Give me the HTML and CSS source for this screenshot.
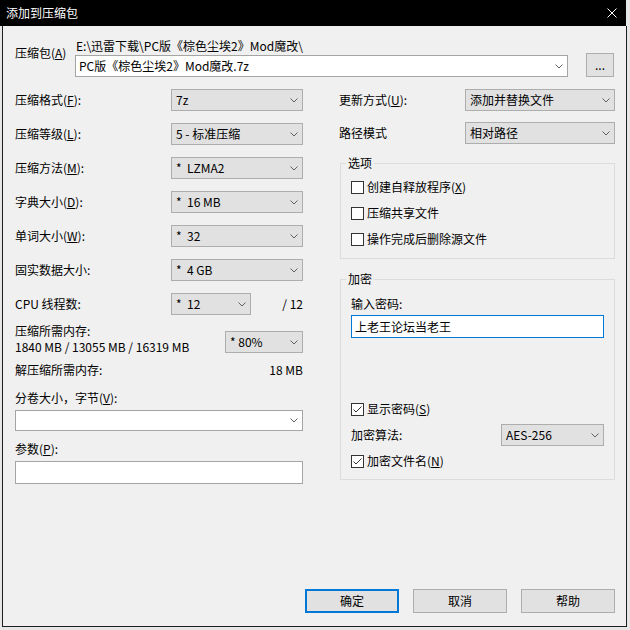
FILE: index.html
```html
<!DOCTYPE html>
<html lang="zh-CN">
<head>
    <meta charset="UTF-8">
    <title>添加到压缩包</title>
    <link rel="stylesheet" href="styles.css">
</head>
<body>

<div class="window">
    <div class="titlebar">
        <span>添加到压缩包</span>
        <svg class="close" viewBox="0 0 10 10"><path d="M0.5 0.5 9.5 9.5 M9.5 0.5 0.5 9.5"/></svg>
    </div>

    <div class="dialog">
        <!-- archive name -->
        <div class="archive-row">
            <div class="archive-label">压缩包(<u>A</u>)</div>
            <div class="archive-path">
                <div class="path-text">E:\迅雷下载\PC版《棕色尘埃2》Mod魔改\</div>
                <div class="combo">
                    <span>PC版《棕色尘埃2》Mod魔改.7z</span>
                    <svg class="chev" viewBox="0 0 8 5"><path d="M0.5 0.5 4 4 7.5 0.5"/></svg>
                </div>
            </div>
            <div class="browse">...</div>
        </div>

        <div class="columns">
            <!-- left: compression settings -->
            <div class="left">
                <div class="field">
                    <span>压缩格式(<u>F</u>):</span>
                    <div class="select"><span>7z</span><svg class="chev" viewBox="0 0 8 5"><path d="M0.5 0.5 4 4 7.5 0.5"/></svg></div>
                </div>
                <div class="field level">
                    <span>压缩等级(<u>L</u>):</span>
                    <div class="select"><span>5 - 标准压缩</span><svg class="chev" viewBox="0 0 8 5"><path d="M0.5 0.5 4 4 7.5 0.5"/></svg></div>
                </div>
                <div class="field">
                    <span>压缩方法(<u>M</u>):</span>
                    <div class="select"><span>* &nbsp;LZMA2</span><svg class="chev" viewBox="0 0 8 5"><path d="M0.5 0.5 4 4 7.5 0.5"/></svg></div>
                </div>
                <div class="field">
                    <span>字典大小(<u>D</u>):</span>
                    <div class="select"><span>* &nbsp;16 MB</span><svg class="chev" viewBox="0 0 8 5"><path d="M0.5 0.5 4 4 7.5 0.5"/></svg></div>
                </div>
                <div class="field">
                    <span>单词大小(<u>W</u>):</span>
                    <div class="select"><span>* &nbsp;32</span><svg class="chev" viewBox="0 0 8 5"><path d="M0.5 0.5 4 4 7.5 0.5"/></svg></div>
                </div>
                <div class="field">
                    <span>固实数据大小:</span>
                    <div class="select"><span>* &nbsp;4 GB</span><svg class="chev" viewBox="0 0 8 5"><path d="M0.5 0.5 4 4 7.5 0.5"/></svg></div>
                </div>
                <div class="field cpu">
                    <span>CPU 线程数:</span>
                    <div class="select"><span>* &nbsp;12</span><svg class="chev" viewBox="0 0 8 5"><path d="M0.5 0.5 4 4 7.5 0.5"/></svg></div>
                    <span class="value">/ 12</span>
                </div>
                <div class="memory">
                    <div>
                        <div>压缩所需内存:</div>
                        <div class="mem-numbers">1840 MB / 13055 MB / 16319 MB</div>
                    </div>
                    <div class="select"><span>* 80%</span><svg class="chev" viewBox="0 0 8 5"><path d="M0.5 0.5 4 4 7.5 0.5"/></svg></div>
                </div>
                <div class="unpack">
                    <span>解压缩所需内存:</span>
                    <span>18 MB</span>
                </div>
                <div class="volume-label">分卷大小，字节(<u>V</u>):</div>
                <div class="combo volume">
                    <span></span>
                    <svg class="chev" viewBox="0 0 8 5"><path d="M0.5 0.5 4 4 7.5 0.5"/></svg>
                </div>
                <div class="params-label">参数(<u>P</u>):</div>
                <div class="textbox params"></div>
            </div>

            <!-- right: update mode, options, encryption -->
            <div class="right">
                <div class="field">
                    <span>更新方式(<u>U</u>):</span>
                    <div class="select"><span>添加并替换文件</span><svg class="chev" viewBox="0 0 8 5"><path d="M0.5 0.5 4 4 7.5 0.5"/></svg></div>
                </div>
                <div class="field path-mode">
                    <span>路径模式</span>
                    <div class="select"><span>相对路径</span><svg class="chev" viewBox="0 0 8 5"><path d="M0.5 0.5 4 4 7.5 0.5"/></svg></div>
                </div>

                <fieldset class="group options">
                    <legend>选项</legend>
                    <div class="group-body">
                        <div class="check">
                            <svg class="box" viewBox="0 0 13 13"><rect x="0.5" y="0.5" width="12" height="12"/></svg>
                            <span>创建自释放程序(<u>X</u>)</span>
                        </div>
                        <div class="check">
                            <svg class="box" viewBox="0 0 13 13"><rect x="0.5" y="0.5" width="12" height="12"/></svg>
                            <span>压缩共享文件</span>
                        </div>
                        <div class="check">
                            <svg class="box" viewBox="0 0 13 13"><rect x="0.5" y="0.5" width="12" height="12"/></svg>
                            <span>操作完成后删除源文件</span>
                        </div>
                    </div>
                </fieldset>

                <fieldset class="group encrypt">
                    <legend>加密</legend>
                    <div class="group-body">
                        <div>输入密码:</div>
                        <div class="textbox password">上老王论坛当老王</div>
                        <div class="check show-pass">
                            <svg class="box" viewBox="0 0 13 13"><rect x="0.5" y="0.5" width="12" height="12"/><path d="M2.5 6.5 5 9 10.5 3.5"/></svg>
                            <span>显示密码(<u>S</u>)</span>
                        </div>
                        <div class="field method">
                            <span>加密算法:</span>
                            <div class="select"><span>AES-256</span><svg class="chev" viewBox="0 0 8 5"><path d="M0.5 0.5 4 4 7.5 0.5"/></svg></div>
                        </div>
                        <div class="check names">
                            <svg class="box" viewBox="0 0 13 13"><rect x="0.5" y="0.5" width="12" height="12"/><path d="M2.5 6.5 5 9 10.5 3.5"/></svg>
                            <span>加密文件名(<u>N</u>)</span>
                        </div>
                    </div>
                </fieldset>
            </div>
        </div>

        <div class="buttons">
            <button class="btn default">确定</button>
            <button class="btn">取消</button>
            <button class="btn">帮助</button>
        </div>
    </div>
</div>

</body>
</html>
```

FILE: styles.css
```css
* { box-sizing: border-box; }
body { margin: 0; background: #e6e6e6; font-family: "Noto Sans CJK SC", "Noto Sans", sans-serif; font-size: 12px; line-height: 14px; color: #000; }
u { text-decoration-thickness: 1px; text-underline-offset: 1px; }

.window { width: 627px; }
.titlebar { width: 626px; height: 26px; background: #000; color: #fff; display: flex; align-items: center; justify-content: space-between; padding: 0 9px 0 6px; }
.close { width: 10px; height: 10px; fill: none; stroke: #fff; stroke-width: 1; }

.dialog { margin-left: 2px; width: 625px; height: 601px; background: #f0f0f0; border: 1px solid #1e1e1e; border-top: none; padding: 13px 11px 13px 12px; display: flex; flex-direction: column; }

/* shared controls */
.select, .combo { height: 22px; display: flex; align-items: center; justify-content: space-between; padding: 0 4px 0 4px; white-space: nowrap; }
.select { background: #e1e1e1; border: 1px solid #adadad; }
.combo { background: #fff; border: 1px solid #a5a5a5; }
.textbox { background: #fff; border: 1px solid #a5a5a5; }
.chev { width: 8px; height: 5px; flex: none; fill: none; stroke: #606060; stroke-width: 1; }
.field { display: grid; align-items: center; white-space: nowrap; }

.archive-row { display: flex; align-items: flex-start; }
.archive-label { width: 60px; padding-top: 7px; }
.archive-path { width: 493px; }
.path-text { padding-left: 1px; white-space: nowrap; }
.archive-path .combo { margin-top: 2px; padding-left: 3px; }
.browse { margin: 14px 0 0 18px; width: 28px; height: 24px; background: #e1e1e1; border: 1px solid #adadad; text-align: center; line-height: 22px; }

.columns { margin-top: 12px; display: grid; grid-template-columns: 288px 276px; column-gap: 36px; }

/* left column */
.left .field { grid-template-columns: 156px 132px; margin-bottom: 12px; }
.left .field.level { margin-top: 1px; }
.left .field.cpu { grid-template-columns: 156px 80px 52px; margin-bottom: 0; }
.cpu .value { text-align: right; }
.memory { margin-top: 9px; display: flex; justify-content: space-between; align-items: flex-start; white-space: nowrap; }
.mem-numbers { margin-top: 2px; }
.memory .select { width: 78px; margin-top: 7px; }
.unpack { margin-top: 9px; display: flex; justify-content: space-between; }
.volume-label { margin-top: 14px; }
.combo.volume { margin-top: 5px; height: 21px; }
.params-label { margin-top: 11px; }
.params { margin-top: 5px; height: 23px; }

/* right column */
.right .field { grid-template-columns: 126px 150px; }
.right .field.path-mode { margin-top: 11px; }
.group { margin: 12px 0 0 1px; padding: 0 10px 12px 5px; border: 1px solid #dcdcdc; min-width: 0; }
.group legend { padding: 0 2px; line-height: 14px; }
.group-body { padding-left: 5px; }
.options .group-body { padding-top: 10px; }
.encrypt { margin-top: 13px; padding-bottom: 11px; }
.encrypt .group-body { padding-top: 11px; }

.check { display: flex; align-items: center; height: 14px; white-space: nowrap; }
.check + .check { margin-top: 12px; }
.box { width: 13px; height: 13px; margin-right: 3px; flex: none; fill: #fff; stroke: #333; stroke-width: 1; }
.box path { fill: none; stroke: #333; }

.password { margin-top: 4px; height: 23px; border-color: #0078d7; padding-left: 3px; line-height: 21px; }
.show-pass { margin-top: 64px; }
.field.method { grid-template-columns: 150px 103px; margin-top: 8px; }
.check.names { margin-top: 8px; }

.buttons { margin-top: auto; display: flex; justify-content: flex-end; gap: 14px; }
.btn { width: 94px; height: 24px; background: #e1e1e1; border: 1px solid #adadad; font: inherit; color: #000; padding: 0; }
.btn.default { border: 2px solid #0078d7; }
```
